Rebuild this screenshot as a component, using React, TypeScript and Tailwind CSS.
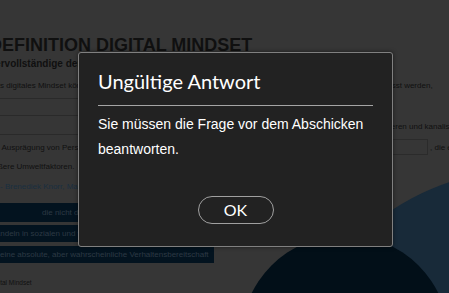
import React from "react";

function Backdrop() {
  return (
    <svg className="absolute inset-0" width="449" height="293" viewBox="0 0 449 293">
      <circle cx="520" cy="400" r="229" fill="#182a39" />
      <circle cx="345" cy="339" r="104" fill="#020f18" />
    </svg>
  );
}

export default function App() {
  return (
    <div className="relative w-[449px] h-[293px] overflow-hidden bg-[#363636] font-['Liberation_Sans',Arial,sans-serif]">
      <Backdrop />

      {/* dimmed page behind the modal */}
      <div className="relative ml-[-11px] w-[480px] pt-[35px] text-[#101010]">
        <h1 className="text-[18px] leading-[20px] font-bold whitespace-nowrap">DEFINITION DIGITAL MINDSET</h1>
        <p className="mt-[3px] text-[10px] leading-[12px] font-bold whitespace-nowrap">Vervollständige den Lückentext</p>

        <div className="mt-[11px] flex text-[8px] leading-[10px] whitespace-nowrap">
          <p className="w-[348px] shrink-0 pl-[4px]">Als digitales Mindset können Einstellungen</p>
          <p>zusammengefasst werden,</p>
        </div>

        <div className="mt-[7px] flex text-[8px] leading-[10px] whitespace-nowrap">
          <div className="w-[360px] shrink-0">
            <div className="h-[17px] border-t border-[#2a2a2a]" />
            <div className="h-[20px] border-y border-[#2a2a2a]" />
          </div>
          <p className="ml-[20px] pt-[24px]">orientieren und kanalisieren</p>
        </div>

        <div className="flex text-[8px] leading-[10px] whitespace-nowrap">
          <p className="w-[403px] shrink-0 pt-[8px]">die Ausprägung von Persönlichkeit</p>
          <div className="mt-[4px] w-[36px] h-[16px] shrink-0 border border-[#2b2b2b]" />
          <p className="pt-[8px] pl-[2px]">, die es</p>
        </div>

        <p className="mt-[7px] text-[8px] leading-[10px] whitespace-nowrap">äußere Umweltfaktoren.</p>
        <p className="mt-[10px] pl-[11px] text-[8px] leading-[10px] whitespace-nowrap text-[#1a2f40]">- Brenediek Knorr, Mayer</p>

        <div className="mt-[11px] flex flex-col items-start text-[8px] whitespace-nowrap text-[#2c3944]">
          <div className="w-[330px] h-[19px] leading-[19px] pl-[53px] bg-[#03131f]">die nicht direkt beobachtbar ist</div>
          <div className="mt-[3px] w-[300px] h-[17px] leading-[17px] pl-[1px] bg-[#03131f]">Handeln in sozialen und technischen Kontexten</div>
          <div className="mt-[4px] w-[225px] h-[17px] leading-[17px] pl-[7px] bg-[#03131f]">keine absolute, aber wahrscheinliche Verhaltensbereitschaft</div>
        </div>

        <p className="mt-[16px] text-[6.5px] leading-[8px] whitespace-nowrap">Digital Mindset</p>
      </div>

      {/* modal */}
      <div className="absolute left-[78px] top-[52px] w-[315px] h-[195px] bg-[#222222] border border-[#808080] rounded-[3px] shadow-[0_0_4px_rgba(0,0,0,0.5)] px-[19px] pt-4">
        <h2 className="font-['Lato',sans-serif] text-[20px] leading-[24px] text-white">Ungültige Antwort</h2>
        <div className="mt-3 h-px bg-[#a5a5a5]" />
        <p className="mt-[6px] text-[14px] leading-[25px] text-white">
          Sie müssen die Frage vor dem Abschicken beantworten.
        </p>
        <button className="mt-[34px] mx-auto flex items-center justify-center w-[76px] h-[28px] rounded-full border border-[#a0a0a0] font-['Lato',sans-serif] text-[16px] text-white">
          OK
        </button>
      </div>
    </div>
  );
}
